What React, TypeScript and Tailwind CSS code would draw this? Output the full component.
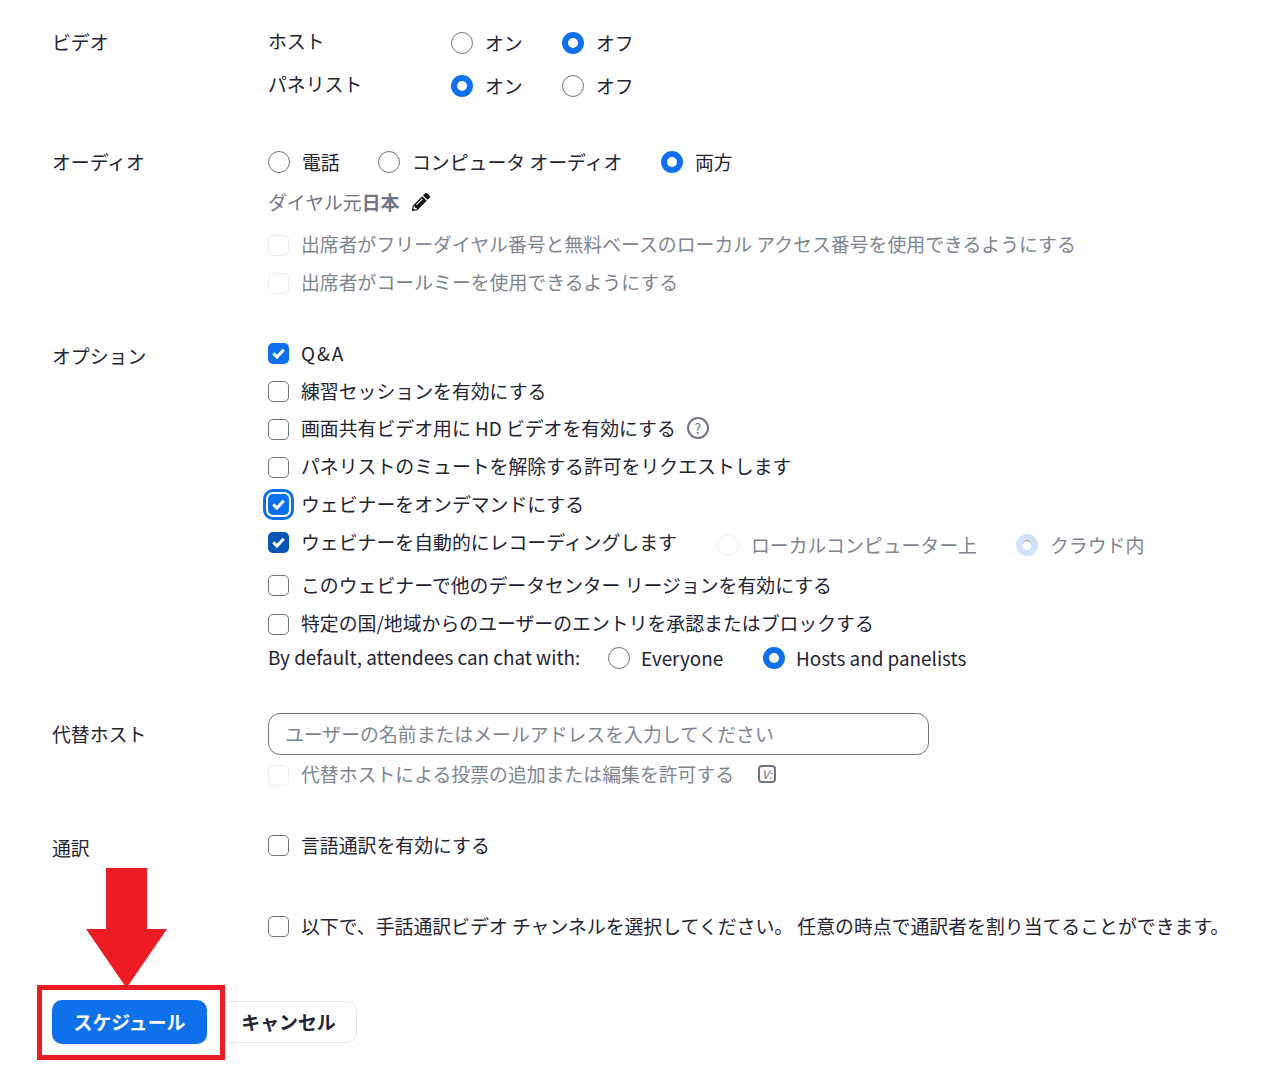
import type { ReactNode } from 'react';
import { FaPencilAlt } from 'react-icons/fa';

function Radio({ on = false, faded = false }: { on?: boolean; faded?: boolean }) {
  if (faded) {
    return on ? (
      <span className="box-border block h-[22px] w-[22px] shrink-0 rounded-full border-[6px] border-[#cfe3fb] bg-white shadow-[inset_0_1px_1px_#8a8f99]" />
    ) : (
      <span className="box-border block h-[22px] w-[22px] shrink-0 rounded-full border border-[#edeef0] bg-white" />
    );
  }
  return on ? (
    <span className="box-border block h-[22px] w-[22px] shrink-0 rounded-full border-[6px] border-[#0e71eb] bg-white" />
  ) : (
    <span className="box-border block h-[22px] w-[22px] shrink-0 rounded-full border border-[#6e7680] bg-white" />
  );
}

function Check({ on = false, dark = false, faded = false, focus = false }: { on?: boolean; dark?: boolean; faded?: boolean; focus?: boolean }) {
  const tone = on
    ? dark
      ? 'bg-[#0956b5]'
      : 'bg-[#0e71eb]'
    : faded
      ? 'border border-[#edeef0] bg-white'
      : 'border border-[#6e7680] bg-white';
  return (
    <span
      className={`box-border flex h-[21px] w-[21px] shrink-0 items-center justify-center rounded-[5px] ${tone} ${
        focus ? 'outline-[3px] outline-offset-[2px] outline-[#0e71eb] outline' : ''
      }`}
    >
      {on && (
        <svg width="13" height="11" viewBox="0 0 13 11" fill="none">
          <path d="M1.3 5.4 L5 9 L11.7 1.8" stroke="white" strokeWidth="3" />
        </svg>
      )}
    </span>
  );
}

function CheckRow({ children, h = 'h-[37.75px]', faded = false, ...rest }: { children: ReactNode; h?: string; faded?: boolean; on?: boolean; dark?: boolean; focus?: boolean }) {
  return (
    <div className={`flex items-center gap-3 ${h} ${faded ? 'text-[#7d8590]' : ''}`}>
      <Check faded={faded} {...rest} />
      <span className="flex -translate-y-[1px] items-center whitespace-nowrap">{children}</span>
    </div>
  );
}

function Section({ label, mt, labelPt, children }: { label: string; mt: string; labelPt: string; children: ReactNode }) {
  return (
    <section className={`flex ${mt}`}>
      <div className={`w-[216px] shrink-0 whitespace-nowrap ${labelPt}`}>{label}</div>
      <div className="min-w-0 flex-1">{children}</div>
    </section>
  );
}

export default function App() {
  return (
    <div className="relative h-[1065px] w-[1264px] overflow-hidden bg-white pl-[52px] font-['Noto_Sans_CJK_JP',sans-serif] text-[18.87px] leading-[26px] text-[#232333]">
      <Section label="ビデオ" mt="mt-[21px]" labelPt="pt-[8px]">
        <div className="flex h-[43px] items-center">
          <span className="w-[183px] -translate-y-[2px]">ホスト</span>
          <Radio />
          <span className="ml-3 w-[77px]">オン</span>
          <Radio on />
          <span className="ml-3">オフ</span>
        </div>
        <div className="flex h-[43px] items-center">
          <span className="w-[183px] -translate-y-[2px]">パネリスト</span>
          <Radio on />
          <span className="ml-3 w-[77px]">オン</span>
          <Radio />
          <span className="ml-3">オフ</span>
        </div>
      </Section>

      <Section label="オーディオ" mt="mt-[40px]" labelPt="pt-[2px]">
        <div className="flex h-[30px] items-center">
          <Radio />
          <span className="ml-3 w-[76px]">電話</span>
          <Radio />
          <span className="ml-3 w-[249px]">コンピュータ オーディオ</span>
          <Radio on />
          <span className="ml-3">両方</span>
        </div>
        <div className="mt-[10px] flex h-[30px] items-center text-[#747487]">
          ダイヤル元<b className="font-bold">日本</b>
          <FaPencilAlt className="ml-[13px] text-[18px] text-[#131619]" />
        </div>
        <div className="mt-[9px]">
          <CheckRow faded h="h-[38px]">出席者がフリーダイヤル番号と無料ベースのローカル アクセス番号を使用できるようにする</CheckRow>
          <CheckRow faded h="h-[38px]">出席者がコールミーを使用できるようにする</CheckRow>
        </div>
      </Section>

      <Section label="オプション" mt="mt-[33px]" labelPt="pt-[8px]">
        <CheckRow on><span className="tracking-[2px]">Q&amp;A</span></CheckRow>
        <CheckRow>練習セッションを有効にする</CheckRow>
        <CheckRow>
          画面共有ビデオ用に HD ビデオを有効にする
          <span className="ml-[11px] flex h-[22px] w-[22px] items-center justify-center rounded-full border-2 border-[#747487] text-[14px] leading-none text-[#747487]">?</span>
        </CheckRow>
        <CheckRow>パネリストのミュートを解除する許可をリクエストします</CheckRow>
        <CheckRow on focus>ウェビナーをオンデマンドにする</CheckRow>
        <div className="flex h-[37.75px] items-center">
          <Check on dark />
          <span className="ml-3 w-[416px] -translate-y-[1px]">ウェビナーを自動的にレコーディングします</span>
          <div className="flex translate-y-[2px] items-center text-[#7d8590]">
            <Radio faded />
            <span className="ml-3 w-[265px]">ローカルコンピューター上</span>
            <Radio faded on />
            <span className="ml-3">クラウド内</span>
          </div>
        </div>
        <CheckRow h="h-[42px] mt-[3px]">このウェビナーで他のデータセンター リージョンを有効にする</CheckRow>
        <CheckRow h="h-[35px]">特定の国/地域からのユーザーのエントリを承認またはブロックする</CheckRow>
        <div className="flex h-[32px] items-center">
          <span className="w-[340px] -translate-y-[1px]">By default, attendees can chat with:</span>
          <Radio />
          <span className="ml-[11px] w-[122px]">Everyone</span>
          <Radio on />
          <span className="ml-[11px]">Hosts and panelists</span>
        </div>
      </Section>

      <Section label="代替ホスト" mt="mt-[39px]" labelPt="pt-[8px]">
        <div className="box-border flex h-[42px] w-[661px] items-center rounded-[12px] border border-[#6e7680] px-[16px] text-[#7d8590]">
          ユーザーの名前またはメールアドレスを入力してください
        </div>
        <CheckRow faded h="h-[41px]">
          代替ホストによる投票の追加または編集を許可する
          <span className="ml-[24px] flex h-[18px] w-[18px] items-center justify-center rounded-[4px] border-2 border-[#747487] text-[12px] italic leading-none text-[#747487]">V:</span>
        </CheckRow>
      </Section>

      <Section label="通訳" mt="mt-[28px]" labelPt="pt-[11px]">
        <CheckRow h="h-[44px]">言語通訳を有効にする</CheckRow>
        <CheckRow h="h-[44px] mt-[37px]">以下で、手話通訳ビデオ チャンネルを選択してください。 任意の時点で通訳者を割り当てることができます。</CheckRow>
      </Section>

      <div className="mt-[51px] flex items-center gap-[13px] font-bold">
        <button className="h-[44px] w-[155px] rounded-[10px] bg-[#0e71eb] text-white">スケジュール</button>
        <button className="box-border h-[42px] w-[137px] rounded-[10px] border border-[#e4e6eb] bg-white">キャンセル</button>
      </div>

      {/* annotation */}
      <div className="absolute left-[37px] top-[985px] h-[75px] w-[188px] border-[5px] border-[#ed1c24]" />
      <svg className="absolute left-[86px] top-[868px]" width="81" height="120" viewBox="0 0 81 120">
        <path d="M20 0 H61 V61 H81 L40.5 120 L0 61 H20 Z" fill="#ed1c24" />
      </svg>
    </div>
  );
}
